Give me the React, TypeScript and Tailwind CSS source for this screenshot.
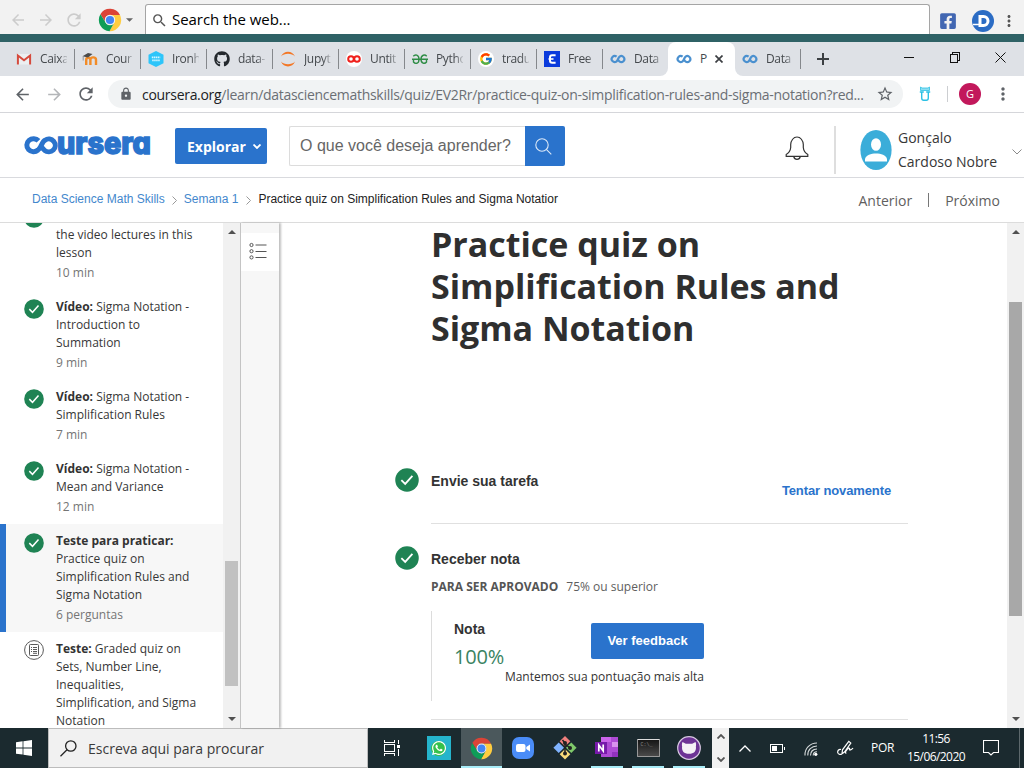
import type { ReactNode } from "react";
import { FcGoogle } from "react-icons/fc";
import { FaGithub, FaWhatsapp, FaFacebookSquare } from "react-icons/fa";
import { MdArrowBack, MdArrowForward, MdRefresh, MdLock, MdStarBorder, MdMoreVert, MdSearch } from "react-icons/md";

function ChromeLogo({ className }: { className: string }) {
  return (
    <svg viewBox="0 0 24 24" className={className}>
      <path d="M2.4 6.3A11.2 11.2 0 0 1 22 7H12A5 5 0 0 0 7.67 14.5Z" fill="#db4437" />
      <path d="M22 7A11.2 11.2 0 0 1 11.5 23.2L16.33 14.5A5 5 0 0 0 12 7Z" fill="#ffcd40" />
      <path d="M11.5 23.2A11.2 11.2 0 0 1 2.4 6.3L7.67 14.5A5 5 0 0 0 16.33 14.5Z" fill="#0f9d58" />
      <circle cx="12" cy="12" r="5.2" fill="#f1f1f1" />
      <circle cx="12" cy="12" r="4.1" fill="#4285f4" />
    </svg>
  );
}

function Infinity({ className, color = "#4a90cf" }: { className: string; color?: string }) {
  return (
    <svg viewBox="0 0 16 16" className={className} fill="none" stroke={color} strokeWidth="2.2">
      <path d="M6.6 5.7A3 3 0 1 0 6.6 10.3C8 9.2 8.2 6.6 9.6 5.6A3 3 0 1 1 9.4 10.4C8.7 9.9 8.3 9.2 8 8.4" />
    </svg>
  );
}

function GmailIcon() {
  return (
    <svg viewBox="0 0 16 16" className="size-4">
      <path d="M1 3h14v10.500H1z" fill="#eceff1" />
      <path d="M1.900 13.500V4.500L8 9.300l6.100-4.800v9" fill="none" stroke="#d54a3d" strokeWidth="2" />
    </svg>
  );
}

function MoodleIcon() {
  return (
    <svg viewBox="0 0 16 16" className="size-4" fill="none">
      <path d="M4.200 14V8.800a2.100 2.100 0 0 1 4.200 0V14M8.400 14V8.800a2.700 2.300 0 0 1 5.600 0V14" stroke="#f28c28" strokeWidth="2.400" />
      <path d="M0.500 5.200 6 2l4.500 1L6 6.500z" fill="#4b4b4b" />
      <path d="M1.200 5.500v4" stroke="#777" strokeWidth="0.700" />
    </svg>
  );
}

function IronhackIcon() {
  return (
    <svg viewBox="0 0 16 16" className="size-4">
      <path d="M8 0l7.500 3.700v8.600L8 16 .5 12.300V3.700z" fill="#2dc5fa" />
      <path d="M3.800 6.300h8.400M4.200 9.300h7.600" stroke="#d6f5ff" strokeWidth="1.800" strokeDasharray="1.500 0.500" />
    </svg>
  );
}

function JupyterIcon() {
  return (
    <svg viewBox="0 0 16 16" className="size-4" fill="none">
      <path d="M1 5.500C3.500 -1 12.500 -1 15 5.500C12 1.800 4 1.800 1 5.500ZM1 10.500C3.500 17 12.500 17 15 10.500C12 14.200 4 14.200 1 10.500Z" fill="#f37726" />
    </svg>
  );
}

function ColabIcon() {
  return (
    <svg viewBox="0 0 16 16" className="size-4" fill="none" strokeWidth="2">
      <circle cx="8" cy="8" r="8" fill="#fff" />
      <circle cx="5" cy="8" r="2.800" stroke="#f0201c" />
      <circle cx="11" cy="8" r="2.800" stroke="#f0201c" />
    </svg>
  );
}

function GeeksIcon() {
  return (
    <svg viewBox="0 0 16 16" className="size-4" fill="none" stroke="#2f8d46" strokeWidth="1.400">
      <path d="M1.300 5.200C3 3.200 7 3.300 7 8.300S3 13 1.500 11V8.300h13V11c-1.500 2-5.500 2-5.500-2.700s4-5.100 5.700-3.100M0 8.300h16" />
    </svg>
  );
}

function EpsilonIcon() {
  return (
    <svg viewBox="0 0 16 16" className="size-4">
      <path d="M0 0h16v16H0z" fill="#0b3bdc" />
      <path d="M11.600 4.300H8.200Q6 4.300 6 6.300V9.700Q6 11.700 8.200 11.700h3.400" fill="none" stroke="#fff" strokeWidth="2" />
      <path d="M4.500 8h5" stroke="#fff" strokeWidth="1.600" />
    </svg>
  );
}

const tabs: { icon: ReactNode; label: string }[] = [
  { icon: <GmailIcon />, label: "Caixa" },
  { icon: <MoodleIcon />, label: "Cour" },
  { icon: <IronhackIcon />, label: "Ironh" },
  { icon: <FaGithub className="size-4 text-[#24292e]" />, label: "data-" },
  { icon: <JupyterIcon />, label: "Jupyt" },
  { icon: <ColabIcon />, label: "Untit" },
  { icon: <GeeksIcon />, label: "Pytho" },
  {
    icon: (
      <span className="flex size-4 items-center justify-center rounded-full bg-white">
        <FcGoogle className="size-[14px]" />
      </span>
    ),
    label: "tradu",
  },
  { icon: <EpsilonIcon />, label: "Free" },
  { icon: <Infinity className="size-4" />, label: "Data" },
];

function Tab({ icon, label, line }: { icon: ReactNode; label: string; line: boolean }) {
  return (
    <div className="flex w-[66px] shrink-0 items-center pl-2">
      <span className="flex size-4 shrink-0">{icon}</span>
      <span className="ml-2 w-[27px] overflow-hidden whitespace-nowrap text-[12px] tracking-[-0.35px] text-[#45494d] [mask-image:linear-gradient(to_right,#000_70%,#0003)]">
        {label}
      </span>
      {line && <span className="-mr-px ml-auto h-5 w-px bg-[#85888c]" />}
    </div>
  );
}

function Check({ className }: { className: string }) {
  return (
    <svg viewBox="0 0 20 20" className={className}>
      <circle cx="10" cy="10" r="9.800" fill="#1f8354" />
      <path d="M5.300 10.100l3.200 3.200 6-6.800" fill="none" stroke="#fff" strokeWidth="1.500" />
    </svg>
  );
}

function QuizIcon() {
  return (
    <svg viewBox="0 0 20 20" className="size-5" fill="none" stroke="#5a5a5a">
      <circle cx="10" cy="10" r="9.400" />
      <rect x="5.500" y="4.500" width="9" height="11" rx="0.800" />
      <path d="M7 7.500h1M9 7.500h4M7 9.500h1M9 9.500h4M7 11.500h1M9 11.500h4M9 13.300h4" />
    </svg>
  );
}

interface Lesson {
  kind: string;
  lines: string[];
  meta: string;
  active?: boolean;
  todo?: boolean;
}

const lessons: Lesson[] = [
  { kind: "Vídeo:", lines: ["Sigma Notation -", "Introduction to", "Summation"], meta: "9 min" },
  { kind: "Vídeo:", lines: ["Sigma Notation -", "Simplification Rules"], meta: "7 min" },
  { kind: "Vídeo:", lines: ["Sigma Notation -", "Mean and Variance"], meta: "12 min" },
  { kind: "Teste para praticar:", lines: ["", "Practice quiz on", "Simplification Rules and", "Sigma Notation"], meta: "6 perguntas", active: true },
  { kind: "Teste:", lines: ["Graded quiz on", "Sets, Number Line,", "Inequalities,", "Simplification, and Sigma", "Notation"], meta: "", todo: true },
];

function LessonRow({ kind, lines, meta, active, todo }: Lesson) {
  return (
    <div className={active ? "flex shrink-0 border-l-[6px] border-[#2a73cc] bg-[#f7f7f7] py-2 pl-[18px]" : "flex shrink-0 py-2 pl-6"}>
      <div className={todo ? "mr-3 h-5 w-5 shrink-0" : "mr-3 mt-px h-5 w-5 shrink-0"}>{todo ? <QuizIcon /> : <Check className="size-5" />}</div>
      <div className="whitespace-nowrap text-[12px] leading-[18px] text-[#373737]">
        {lines.map((l, i) => (
          <div key={l}>
            {i === 0 && <b className="text-[#333]">{kind}</b>} {l}
          </div>
        ))}
        {meta && <div className="mt-[2px] text-[#757575]">{meta}</div>}
      </div>
    </div>
  );
}

function Arrow({ down = false }: { down?: boolean }) {
  return (
    <svg viewBox="0 0 8 4" className="h-1 w-2 shrink-0" fill="#505050">
      {down ? <path d="M0 0h8L4 4z" /> : <path d="M0 4h8L4 0z" />}
    </svg>
  );
}

function OuterBar() {
  return (
    <div className="flex h-[34px] bg-[#f2f2f2]">
      <div className="flex w-[145px] items-center pl-[9px] pt-[6px] text-[#cccccc]">
        <MdArrowBack className="size-[18px]" />
        <MdArrowForward className="ml-[10px] size-[18px]" />
        <MdRefresh className="ml-[9px] size-[20px]" />
        <ChromeLogo className="ml-[14px] size-6" />
        <svg viewBox="0 0 8 4" className="ml-1 h-1 w-[7px]" fill="#666">
          <path d="M0 0h8L4 4z" />
        </svg>
      </div>
      <div className="mt-1 flex w-[785px] items-center rounded-t-[3px] border border-b-0 border-[#a5a5a5] bg-white pl-[5px]">
        <MdSearch className="mt-px size-[17px] text-[#555]" />
        <span className="ml-[4px] whitespace-nowrap text-[15px] tracking-[-0.05px] text-black">Search the web...</span>
      </div>
      <div className="flex flex-1 items-center pl-[9px] pt-[7px]">
        <FaFacebookSquare className="size-[18px] text-[#4267b2]" />
        <svg viewBox="0 0 22 22" className="ml-[15px] size-[22px]">
          <circle cx="11" cy="11" r="11" fill="#2b6cc4" />
          <path d="M8 6.500h3.500a4.500 4.500 0 0 1 0 9H8z" fill="none" stroke="#fff" strokeWidth="3" />
          <path d="M1 14.500h6" stroke="#fff" strokeWidth="1.500" />
        </svg>
        <MdMoreVert className="ml-[6px] size-[18px] text-[#555]" />
      </div>
    </div>
  );
}

function TabStrip() {
  return (
    <div className="flex h-[34px] bg-white">
      <div className="flex w-[668px] rounded-br-[8px] bg-[#dee1e6] pl-2">
        {tabs.map((t, i) => (
          <Tab key={i} icon={t.icon} label={t.label} line={i < 9} />
        ))}
      </div>
      <div className="w-[67px] bg-[linear-gradient(#dee1e6_50%,#fff_50%)]">
        <div className="flex h-full items-center rounded-t-[8px] bg-white pl-2">
          <Infinity className="size-4" />
          <span className="ml-2 w-[7px] text-[12px] text-[#45494d]">P</span>
          <svg viewBox="0 0 8 8" className="ml-[8px] size-2" stroke="#3c3f43" strokeWidth="1.700">
            <path d="M0.500 0.500l7 7M7.500 0.500l-7 7" />
          </svg>
        </div>
      </div>
      <div className="flex flex-1 items-center rounded-bl-[8px] bg-[#dee1e6]">
        <div className="-ml-px flex">
          <Tab icon={<Infinity className="size-4" />} label="Data" line />
        </div>
        <svg viewBox="0 0 12 12" className="ml-[17px] size-3" stroke="#3c4043" strokeWidth="2">
          <path d="M6 0v12M0 6h12" />
        </svg>
        <svg viewBox="0 0 104 12" className="mb-1 ml-[75px] h-3 w-[104px]" fill="none" stroke="#111" shapeRendering="crispEdges">
          <path d="M0 6.500h10M46.500 3.500h7v8h-7zM48.500 3v-2h7v8h-2" />
          <path d="M91.500 1.500l10 10M101.500 1.500l-10 10" shapeRendering="auto" />
        </svg>
      </div>
    </div>
  );
}

function AddressBar() {
  return (
    <div className="flex h-[37px] items-center border-b border-[#d5d6da] bg-white pl-[13px] text-[#5f6368]">
      <MdArrowBack className="size-[19px]" />
      <MdArrowForward className="ml-[13px] size-[19px] text-[#b4b6b9]" />
      <MdRefresh className="ml-[12px] size-[20px]" />
      <div className="ml-3 flex h-7 w-[795px] items-center rounded-full bg-[#f1f3f4] pl-[11px]">
        <MdLock className="size-[14px]" />
        <span className="ml-[9px] whitespace-nowrap text-[14px] tracking-[-0.295px] text-[#6b6f74]">
          <span className="text-[#202124]">coursera.org</span>
          /learn/datasciencemathskills/quiz/EV2Rr/practice-quiz-on-simplification-rules-and-sigma-notation?red...
        </span>
        <MdStarBorder className="ml-auto mr-[9px] size-[18px]" />
      </div>
      <svg viewBox="0 0 12 16" className="ml-4 h-[16px] w-3" fill="none" stroke="#2bc0e4">
        <path d="M1.500 1l1.500 1h6l1.500-1v3.500h-9z" fill="#8fdff2" strokeWidth="0.800" />
        <path d="M2.700 5.500V12q0 2.300 2 2.300h2.600q2 0 2-2.300V5.500M0.800 6h4M7.200 6h4" strokeWidth="1.400" />
      </svg>
      <span className="ml-4 h-[16px] w-px bg-[#ccced1]" />
      <span className="ml-[11px] flex size-[22px] items-center justify-center rounded-full bg-[#c2185b] text-[11px] text-white">G</span>
      <MdMoreVert className="ml-[12px] size-[20px]" />
    </div>
  );
}

function CourseraLogo() {
  return (
    <svg viewBox="0 0 128 24" className="h-6 w-32" fill="none">
      <path
        d="M14.500 7.800A6.700 6.500 0 1 0 14 17C17.800 14.500 17.500 8.800 21 7.200A6.500 6.400 0 1 1 20.500 17.300C18.700 16 17.300 14 16.700 12"
        stroke="#2a73cc"
        strokeWidth="5"
      />
      <text
        x="33"
        y="20.800"
        textLength="94"
        lengthAdjust="spacingAndGlyphs"
        fill="#2a73cc"
        stroke="#2a73cc"
        strokeWidth="1.500"
        className="font-['Inter',sans-serif] text-[30.500px] font-extrabold [font-feature-settings:'cv11']"
      >
        ursera
      </text>
    </svg>
  );
}

function SiteHeader() {
  return (
    <div className="flex h-[65px] items-center border-b border-[#d9dade] bg-white pl-6">
      <CourseraLogo />
      <button className="mt-[2px] ml-[23px] flex h-9 w-[92px] items-center rounded-[2px] bg-[#2a73cc] pl-3 text-[14px] font-bold text-white">
        Explorar
        <svg viewBox="0 0 8 5" className="ml-[7px] mt-px h-[5px] w-2" fill="none" stroke="#fff" strokeWidth="1.800">
          <path d="M0.500 0.500L4 4l3.500-3.500" />
        </svg>
      </button>
      <div className="mt-[2px] ml-[22px] flex h-10 w-[276px]">
        <div className="flex-1 whitespace-nowrap rounded-l-[2px] border border-r-0 border-[#dcdcdc] pl-[10px] font-['Liberation_Sans',sans-serif] text-[16px] leading-[38px] text-[#666]">
          O que você deseja aprender?
        </div>
        <div className="flex w-10 items-center justify-center rounded-r-[2px] bg-[#2a73cc]">
          <svg viewBox="0 0 17 17" className="mr-[4px] size-[17px]" fill="none" stroke="#dce9f8" strokeWidth="1.100">
            <circle cx="7" cy="7" r="6.200" />
            <path d="M11.300 11.300l5 5" />
          </svg>
        </div>
      </div>
      <svg viewBox="0 0 24 26" className="ml-[220px] mt-[7px] h-[26px] w-6" fill="none" stroke="#333" strokeWidth="1.200">
        <path d="M1.200 20.400h21.600v-1.900c-2.500-1.500-4.200-3.500-4.500-7V8.500C18 4.500 15.600 1 12 1S6 4.500 5.700 8.500v3c-.3 3.500-2 5.500-4.500 7zM8.700 20.500a3.400 3.700 0 0 0 6.600 0" />
      </svg>
      <span className="ml-[25px] mt-[10px] h-[48px] w-[2px] bg-[#dedede]" />
      <svg viewBox="0 0 32 40" className="ml-[24px] mt-[10px] h-10 w-8" fill="none">
        <ellipse cx="16" cy="20" rx="15.600" ry="20" fill="#3badd9" />
        <ellipse cx="16" cy="14.500" rx="5" ry="6.300" fill="#fff" />
        <path d="M5 31.500v-2.500c1-4 6-5.500 11-5.500s10 1.500 11 5.500v2.500z" fill="#fff" />
      </svg>
      <div className="ml-[6px] mt-[10px] w-[101px] whitespace-nowrap text-[14px] leading-6 text-[#373737]">
        <div>Gonçalo</div>
        <div>Cardoso Nobre</div>
      </div>
      <svg viewBox="0 0 10 6" className="ml-[13px] mt-[13px] h-[6px] w-[10px] shrink-0" fill="none" stroke="#8a8a8a">
        <path d="M0.500 0.500L5 5l4.500-4.500" />
      </svg>
    </div>
  );
}

function Chevron() {
  return (
    <svg viewBox="0 0 5 9" className="mx-[7.500px] mt-[3px] h-[9px] w-[5px]" fill="none" stroke="#999">
      <path d="M0.500 0.500l4 4-4 4" />
    </svg>
  );
}

function Breadcrumb() {
  return (
    <div className="flex h-[45px] items-center border-b border-[#dcdcdc] bg-white pl-8 pr-6">
      <div className="mb-[2px] flex items-center whitespace-nowrap font-['Liberation_Sans',sans-serif] text-[12px] text-[#4387cd]">
        Data Science Math Skills
        <Chevron />
        <span className="-ml-px">Semana 1</span>
        <Chevron />
        <span className="text-[#222]">Practice quiz on Simplification Rules and Sigma Notatior</span>
      </div>
      <div className="ml-auto flex items-center text-[14px] text-[#5f5f5f]">
        Anterior
        <span className="mx-4 h-[14px] w-px bg-[#777]" />
        Próximo
      </div>
    </div>
  );
}

function Sidebar() {
  return (
    <>
      <div className="flex w-[223px] flex-col overflow-hidden bg-white">
        <div className="-mt-[23px] flex shrink-0 py-2 pl-6">
          <Check className="mr-3 size-5" />
          <div className="pt-[18px] text-[12px] leading-[18px] text-[#373737]">
            <div>the video lectures in this</div>
            <div>lesson</div>
            <div className="mt-[2px] text-[#757575]">10 min</div>
          </div>
        </div>
        {lessons.map((l, i) => (
          <LessonRow key={i} {...l} />
        ))}
      </div>
      <div className="flex w-[17px] flex-col items-center bg-[#f1f1f1] pb-[7px] pt-[7px]">
        <Arrow />
        <div className="mt-[327px] h-[125px] w-[13px] bg-[#c1c1c1]" />
        <div className="mt-auto flex">
          <Arrow down />
        </div>
      </div>
      <div className="z-10 mr-px w-[39px] border-l border-[#c4c4c4] bg-[#f7f7f7] pt-[10px] shadow-[2px_0_2px_rgba(0,0,0,0.25)]">
        <div className="flex h-[38px] w-[38px] items-center justify-center bg-white">
          <svg viewBox="0 0 18 18" className="mr-[4px] mt-[-3px] size-[18px]" fill="none" stroke="#555">
            <circle cx="2.500" cy="3" r="1.600" />
            <circle cx="2.500" cy="9.200" r="1.600" />
            <circle cx="2.500" cy="15.400" r="1.600" />
            <path d="M6.500 3h11M6.500 9.500h11M6.500 15.500h11" />
          </svg>
        </div>
      </div>
    </>
  );
}

function QuizPage() {
  return (
    <main className="flex-1 overflow-hidden bg-white pl-[115px]">
      <h1 className="ml-[36px] w-[477px] text-[34px] font-bold leading-[42px] tracking-[-0.02px] text-[#2f2f2f]">
        Practice quiz on
        <br />
        Simplification Rules and
        <br />
        Sigma Notation
      </h1>
      <section className="mt-[119px] flex">
        <Check className="size-6" />
        <div className="ml-3 flex h-14 w-[477px] justify-between border-b border-[#e0e0e0] pr-[17px] font-['Liberation_Sans',sans-serif] font-bold">
          <span className="text-[14px] leading-[26px] text-[#333]">Envie sua tarefa</span>
          <span className="text-[13px] leading-[46px] tracking-[-0.12px] text-[#2a73cc]">Tentar novamente</span>
        </div>
      </section>
      <section className="mt-[22px] flex">
        <Check className="size-6" />
        <div className="ml-3 w-[477px] border-b border-[#e0e0e0] pb-[18px]">
          <div className="font-['Liberation_Sans',sans-serif] text-[14px] font-bold leading-[26px] text-[#333]">Receber nota</div>
          <div className="mt-[6px] flex text-[12px] leading-[18px] text-[#5e5e5e]">
            <b className="text-[#555]">PARA SER APROVADO</b>
            <span className="ml-2">75% ou superior</span>
          </div>
          <div className="mt-[15px] flex h-[90px] border-l border-[#dcdcdc] pl-[22px]">
            <div className="w-[51px] pt-2">
              <div className="font-['Liberation_Sans',sans-serif] text-[14px] font-bold leading-5 text-[#333]">Nota</div>
              <div className="mt-1 text-[20px] leading-7 tracking-[-0.2px] text-[#3a8362]">100%</div>
            </div>
            <div className="flex w-[199px] flex-col items-end pt-3">
              <button className="h-9 w-[113px] shrink-0 rounded-[2px] bg-[#2a73cc] font-['Liberation_Sans',sans-serif] text-[13px] font-bold text-white">
                Ver feedback
              </button>
              <span className="mt-[9px] whitespace-nowrap text-[12px] leading-[18px] text-[#333]">Mantemos sua pontuação mais alta</span>
            </div>
          </div>
        </div>
      </section>
    </main>
  );
}

function Cell({ children, width, open, lit }: { children: ReactNode; width: string; open?: boolean; lit?: boolean }) {
  return (
    <div className={`${width} flex h-full shrink-0 flex-col items-center ${lit ? "bg-[#4b585c]" : ""}`}>
      <div className="flex flex-1 items-center">{children}</div>
      <span className={open ? "-mt-[2px] h-[2px] w-full bg-[#a8ecf7]" : "-mt-[2px] h-[2px]"} />
    </div>
  );
}

function Taskbar() {
  return (
    <footer className="flex h-10 bg-[#1b2a2f] text-white">
      <div className="flex w-12 items-center justify-center">
        <svg viewBox="0 0 16 16" className="size-4" fill="#fff">
          <path d="M0 2.200l6.600-.9v6.200H0zM7.400 1.200L16 0v7.500H7.400zM0 8.400h6.600v6.200L0 13.700zM7.400 8.400H16V16l-8.600-1.200z" />
        </svg>
      </div>
      <div className="flex w-[320px] items-center border border-[#bcbcbc] bg-[#f1f1f1] pl-[11px]">
        <svg viewBox="0 0 17 17" className="size-[17px]" fill="none" stroke="#222" strokeWidth="1.300">
          <circle cx="10.800" cy="6" r="5.200" />
          <path d="M7 9.800L0.500 16.300" />
        </svg>
        <span className="ml-[11px] whitespace-nowrap text-[14px] text-[#3a3a3a]">Escreva aqui para procurar</span>
      </div>
      <Cell width="w-[48px]">
        <svg viewBox="0 0 16 16" className="size-4" fill="none" stroke="#fff" shapeRendering="crispEdges">
          <path d="M.5 4.500h10v7H.5zM.5 0v2.500h10V0M.5 16v-2.500h10V16M14.500 0v4M14.500 9v7" />
          <path d="M13 4.500h3v3h-3z" fill="#fff" stroke="none" />
        </svg>
      </Cell>
      <Cell width="w-[45px]">
        <span className="flex size-6 items-center justify-center bg-[#25b4cc]">
          <span className="flex size-[15px] items-center justify-center rounded-full bg-[#35c14b]">
            <FaWhatsapp className="size-[16px] shrink-0 text-white" />
          </span>
        </span>
      </Cell>
      <Cell width="w-[41px]" open lit>
        <ChromeLogo className="size-[23px]" />
      </Cell>
      <Cell width="w-[42px]">
        <svg viewBox="0 0 22 22" className="size-[22px]">
          <rect width="22" height="22" rx="7" fill="#4a8cf7" />
          <rect x="4" y="7" width="9.500" height="8" rx="2" fill="#fff" />
          <path d="M14.300 10l3.700-2.600v7.200L14.300 12z" fill="#fff" />
        </svg>
      </Cell>
      <Cell width="w-[42px]">
        <svg viewBox="0 0 24 24" className="size-6">
          <path d="M12 0l5.300 5.300L12 10.600 6.700 5.300z" fill="#f1807e" />
          <path d="M5.700 6.400L11 11.700 5.700 17 .4 11.700z" fill="#80b3ff" />
          <path d="M18.300 6.400l5.300 5.300-5.300 5.300L13 11.700z" fill="#7fc96b" />
          <path d="M12 12.900l5.300 5.300L12 23.500l-5.300-5.300z" fill="#fbdc7b" />
          <path d="M9.500 4l2.500 3v11M12 8l5 4" fill="none" stroke="#222" strokeWidth="1.500" />
          <circle cx="12" cy="7" r="2" fill="#222" />
          <circle cx="12" cy="17.500" r="2" fill="#222" />
          <circle cx="17" cy="12" r="2" fill="#222" />
        </svg>
      </Cell>
      <div className="ml-[5px] flex gap-[9px]">
        <Cell width="w-8" open>
          <svg viewBox="0 0 24 24" className="size-6">
            <path d="M6 1h17v20H6z" fill="#ae4bd5" />
            <path d="M6 1h10v5H6z" fill="#ca64ea" />
            <path d="M17 6h6v5h-6z" fill="#d892ee" />
            <path d="M17 16h6v5h-6z" fill="#9332bf" />
            <path d="M0 6h12v12H0z" fill="#7719aa" />
            <path d="M3.800 15.500V9l4.400 6V8.500" fill="none" stroke="#fff" strokeWidth="1.700" />
          </svg>
        </Cell>
        <Cell width="w-8" open>
          <span className="flex h-[18px] w-[23px] items-start rounded-[1px] border border-[#999] border-t-[#ddd] bg-[linear-gradient(#161616,#4a4a4a)] pl-[3px] pt-[3px] font-['Liberation_Mono',monospace] text-[5px] leading-[5px] text-[#888]">
            C:\_
          </span>
        </Cell>
        <Cell width="w-8" open>
          <svg viewBox="0 0 24 24" className="size-6">
            <circle cx="12" cy="12" r="11.300" fill="#6d3395" stroke="#d8c9e2" strokeWidth="1.200" />
            <path d="M5.500 6l3.300 1.800h6.400L18.500 6c.8 2 .6 3.200.4 4.200.6 5-1.900 7.500-6.900 7.500s-7.500-2.500-6.900-7.500c-.2-1-.4-2.200.4-4.200z" fill="#f4f0f6" />
          </svg>
        </Cell>
      </div>
      <div className="ml-[7px] flex w-[17px] flex-col items-center justify-between bg-[#f1f1f1] py-[6px]">
        <svg viewBox="0 0 8 5" className="h-[5px] w-2" fill="none" stroke="#555" strokeWidth="1.800">
          <path d="M0.500 4.500L4 1l3.500 3.500" />
        </svg>
        <svg viewBox="0 0 8 5" className="h-[5px] w-2" fill="none" stroke="#555" strokeWidth="1.800">
          <path d="M0.500 0.500L4 4l3.500-3.500" />
        </svg>
      </div>
      <div className="flex flex-1 items-center pl-[10px]">
        <svg viewBox="0 0 12 7" className="h-[7px] w-3" fill="none" stroke="#fff" strokeWidth="1.300">
          <path d="M0.500 6.500L6 1l5.500 5.500" />
        </svg>
        <svg viewBox="0 0 15 9" className="ml-[19px] mt-px h-[9px] w-[15px]" fill="none" stroke="#fff" shapeRendering="crispEdges">
          <path d="M.5 .5h12v8H.5zM14.500 3v3" />
          <path d="M2 2h5v5H2z" fill="#fff" stroke="none" />
        </svg>
        <svg viewBox="0 0 14 14" className="ml-[19px] mt-[2px] size-[14px]" fill="none" stroke="#d6dadb" strokeWidth="1.100">
          <path d="M1 13.500C.5 6.500 6 1 13 1M3.800 13.500C3.500 8 7.500 4 13 4M6.500 13.500C6.500 9.500 9 7 13 7" />
          <path d="M9.200 13.500c0-2.300 1.500-3.700 3.800-3.700" />
          <circle cx="11.800" cy="12.300" r="1.600" fill="#fff" stroke="none" />
        </svg>
        <svg viewBox="0 0 17 16" className="ml-[19px] h-4 w-[17px]" fill="none" stroke="#fff" strokeWidth="1.200">
          <path d="M4 9.500C1.500 9 .5 11 .7 12.500c.4 2.300 3.300 2.300 4.300 1.300M5 13.800l.5-4L11.800 1.300l2 1.700L7.500 12zM9.300 13.500c-2-1.200.2-3 1.200-4.500 1-1.300 2.500-1 2 .3s2.200.7 3.500-1.300" />
        </svg>
        <span className="ml-[17px] w-[23px] text-[12px] tracking-[-0.300px]">POR</span>
        <div className="ml-[13px] w-[58px] whitespace-nowrap text-center text-[12px] leading-[18px] tracking-[-0.57px]">
          <div>11:56</div>
          <div>15/06/2020</div>
        </div>
        <svg viewBox="0 0 16 16" className="ml-[18px] size-4" fill="none" stroke="#fff" strokeWidth="1.100">
          <path d="M.5 .5h15v12H10.500L8 15l-2.500-2.500H.5z" />
        </svg>
        <span className="ml-auto mr-1 h-full w-px bg-[#5d686c]" />
      </div>
    </footer>
  );
}

export default function App() {
  return (
    <div className="flex h-[768px] w-[1024px] flex-col overflow-hidden bg-white font-['Open_Sans',sans-serif]">
      <OuterBar />
      <div className="h-2 bg-[#2f6266]" />
      <TabStrip />
      <AddressBar />
      <SiteHeader />
      <Breadcrumb />
      <div className="flex h-[505px]">
        <Sidebar />
        <QuizPage />
        <div className="flex w-[17px] flex-col items-center bg-[#f1f1f1] pb-[7px] pt-[7px]">
          <Arrow />
          <div className="mt-[68px] h-[314px] w-[13px] bg-[#a8a8a8]" />
          <div className="mt-auto flex">
            <Arrow down />
          </div>
        </div>
      </div>
      <Taskbar />
    </div>
  );
}
